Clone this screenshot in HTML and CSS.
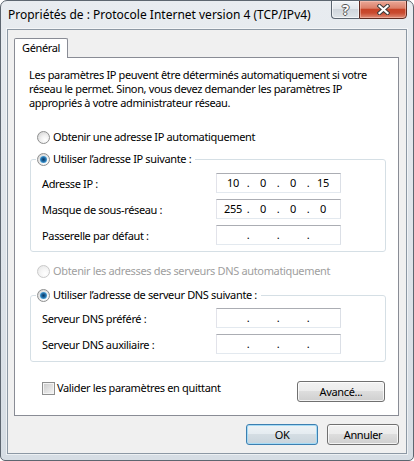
FILE: index.html
```html
<!DOCTYPE html>
<html lang="fr">

<head>
    <meta charset="UTF-8">
    <meta name="viewport" content="width=device-width, initial-scale=1.0">
    <title>Propriétés de : Protocole Internet version 4 (TCP/IPv4)</title>
    <link rel="stylesheet" href="styles.css">
</head>

<body>
    <div class="window">
        <div class="titlebar">
            <span class="title">Propriétés de : Protocole Internet version 4 (TCP/IPv4)</span>
            <div class="caption-buttons">
                <span class="cap-btn cap-help">?</span>
                <span class="cap-btn cap-close">
                    <svg width="13" height="11" viewBox="0 0 13 11">
                        <path d="M2.5 2 L10.5 9 M10.5 2 L2.5 9" stroke="#3b3b3b" stroke-width="4.2" stroke-linecap="square" />
                        <path d="M2.5 2 L10.5 9 M10.5 2 L2.5 9" stroke="#fff" stroke-width="2.2" stroke-linecap="square" />
                    </svg>
                </span>
            </div>
        </div>

        <div class="client">
            <div class="tabs">
                <span class="tab">Général</span>
            </div>

            <div class="tab-page">
                <p class="intro">Les paramètres IP peuvent être déterminés automatiquement si votre<br>réseau le permet. Sinon, vous devez demander les paramètres IP<br>appropriés à votre administrateur réseau.</p>

                <div class="option option-ip-auto"><span class="radio"></span>Obtenir une adresse IP automatiquement</div>

                <fieldset class="group group-ip">
                    <legend><span class="option"><span class="radio checked"></span>Utiliser l’adresse IP suivante :</span></legend>
                    <div class="field-row">
                        <span>Adresse IP :</span>
                        <div class="ip-box"><span class="octet">10</span><span class="dot">.</span><span class="octet">0</span><span class="dot">.</span><span class="octet">0</span><span class="dot">.</span><span class="octet">15</span></div>
                    </div>
                    <div class="field-row">
                        <span>Masque de sous-réseau :</span>
                        <div class="ip-box"><span class="octet">255</span><span class="dot">.</span><span class="octet">0</span><span class="dot">.</span><span class="octet">0</span><span class="dot">.</span><span class="octet">0</span></div>
                    </div>
                    <div class="field-row">
                        <span>Passerelle par défaut :</span>
                        <div class="ip-box"><span class="octet"></span><span class="dot">.</span><span class="octet"></span><span class="dot">.</span><span class="octet"></span><span class="dot">.</span><span class="octet"></span></div>
                    </div>
                </fieldset>

                <div class="option option-dns-auto disabled"><span class="radio"></span>Obtenir les adresses des serveurs DNS automatiquement</div>

                <fieldset class="group group-dns">
                    <legend><span class="option"><span class="radio checked"></span>Utiliser l’adresse de serveur DNS suivante :</span></legend>
                    <div class="field-row">
                        <span>Serveur DNS préféré :</span>
                        <div class="ip-box"><span class="octet"></span><span class="dot">.</span><span class="octet"></span><span class="dot">.</span><span class="octet"></span><span class="dot">.</span><span class="octet"></span></div>
                    </div>
                    <div class="field-row">
                        <span>Serveur DNS auxiliaire :</span>
                        <div class="ip-box"><span class="octet"></span><span class="dot">.</span><span class="octet"></span><span class="dot">.</span><span class="octet"></span><span class="dot">.</span><span class="octet"></span></div>
                    </div>
                </fieldset>

                <div class="validate-row">
                    <span class="option"><span class="checkbox"></span>Valider les paramètres en quittant</span>
                    <button class="btn btn-advanced">Avancé...</button>
                </div>
            </div>

            <div class="dialog-buttons">
                <button class="btn btn-default">OK</button>
                <button class="btn">Annuler</button>
            </div>
        </div>
    </div>
</body>

</html>
```

FILE: styles.css
```css
body {
    margin: 0;
    background: #fff;
    font-family: "Segoe UI", "Noto Sans", sans-serif;
    font-size: 11px;
    letter-spacing: -0.35px;
    color: #000;
}

.window {
    width: 414px;
    height: 461px;
    box-sizing: border-box;
    border: 1px solid #5d6670;
    border-radius: 7px 7px 5px 5px;
    background: linear-gradient(180deg, #e8ecf0 0%, #dde3e9 60%, #d6dde4 100%);
    overflow: hidden;
}

/* title bar */

.titlebar {
    height: 28px;
    display: flex;
    align-items: flex-start;
}

.title {
    padding: 6px 0 0 7px;
    line-height: 16px;
    font-size: 12px;
    letter-spacing: 0;
}

.caption-buttons {
    display: flex;
    margin: -1px 6px 0 auto;
}

.cap-btn {
    height: 19px;
    box-sizing: border-box;
    border: 1px solid #5b6570;
    display: flex;
    align-items: center;
    justify-content: center;
}

.cap-help {
    width: 28px;
    border-right: none;
    border-radius: 0 0 0 4px;
    background: linear-gradient(#f1f4f7, #e3e7eb 45%, #d0d6dc 50%, #dfe4e9);
    box-shadow: inset 0 0 0 1px rgba(255, 255, 255, 0.6);
    color: #fff;
    font-weight: bold;
    font-size: 14px;
    text-shadow: 1px 0 0 #555, -1px 0 0 #555, 0 1px 0 #555, 0 -1px 0 #555;
}

.cap-close {
    width: 48px;
    border-color: #5e2a20;
    border-radius: 0 0 4px 0;
    background: linear-gradient(#eaa897 0%, #dc7f69 42%, #c74428 50%, #c94a2f 70%, #df8d77 100%);
    box-shadow: inset 0 0 0 1px rgba(255, 210, 200, 0.45);
}

/* client area */

.client {
    margin: 0 6px;
    height: 425px;
    box-sizing: border-box;
    border: 1px solid #8c98a4;
    background: #f0f0f0;
    padding: 8px 7px 8px 6px;
    box-shadow: 0 0 0 1px rgba(255, 255, 255, 0.55);
}

.tabs {
    display: flex;
}

.tab {
    position: relative;
    z-index: 1;
    width: 54px;
    height: 20px;
    box-sizing: border-box;
    padding-left: 7px;
    margin-bottom: -1px;
    line-height: 18px;
    border: 1px solid #898c95;
    border-bottom: none;
    border-radius: 2px 2px 0 0;
    background: #fff;
}

.tab-page {
    height: 359px;
    box-sizing: border-box;
    border: 1px solid #898c95;
    background: #fff;
    padding: 10px 12px 0 14px;
}

.intro {
    margin: 0;
    line-height: 14px;
    white-space: nowrap;
}

.option {
    display: flex;
    align-items: center;
    line-height: 14px;
    white-space: nowrap;
}

.option-ip-auto {
    margin: 20px 0 0 8px;
}

.option-dns-auto {
    margin: 12px 0 0 8px;
}

.disabled {
    color: #a0a0a0;
}

.radio {
    position: relative;
    flex: none;
    width: 13px;
    height: 13px;
    box-sizing: border-box;
    margin-right: 3px;
    border: 1px solid #8e8f8f;
    border-radius: 50%;
    background: radial-gradient(circle at 65% 70%, #fff 0%, #f1f1f1 40%, #cdcdcd 100%);
}

.disabled .radio {
    border-color: #c9c9c9;
    background: radial-gradient(circle at 65% 70%, #fff 0%, #f6f6f6 40%, #e4e4e4 100%);
}

.radio.checked::after {
    content: "";
    position: absolute;
    inset: 2px;
    border-radius: 50%;
    background: radial-gradient(circle at 50% 50%, #0e3b63 0%, #1b5f97 35%, #4aa4dc 72%, #a6d9f4 100%);
}

.checkbox {
    flex: none;
    width: 13px;
    height: 13px;
    box-sizing: border-box;
    margin-right: 2px;
    border: 1px solid #8e8f8f;
    background: linear-gradient(135deg, #c9c9c9, #f6f6f6);
    box-shadow: inset 0 0 0 1px #f4f4f4;
}

/* group boxes */

.group {
    margin: 0 0 0 1px;
    min-width: 0;
    border: 1px solid #d5dfe5;
    border-radius: 3px;
    padding: 7px 0 6px 11px;
}

.group legend {
    margin-left: -6px;
    padding: 0 4px 0 1px;
}

.group-ip {
    margin-top: 8px;
}

.group-dns {
    margin-top: 10px;
    padding-top: 6px;
    padding-bottom: 7px;
}

.field-row {
    display: grid;
    grid-template-columns: 174px 125px;
    align-items: center;
    height: 20px;
}

.field-row + .field-row {
    margin-top: 6px;
}

.ip-box {
    display: flex;
    height: 20px;
    box-sizing: border-box;
    padding-left: 4px;
    line-height: 18px;
    border: 1px solid;
    border-color: #abadb3 #dbdfe6 #e3e9ef #e2e3ea;
    background: #fff;
}

.octet {
    width: 24px;
    text-align: center;
}

.dot {
    width: 6px;
    text-align: center;
}

.validate-row {
    display: flex;
    align-items: flex-start;
    justify-content: space-between;
    margin-top: 19px;
    padding: 0 1px 0 13px;
}

/* buttons */

.btn {
    width: 72px;
    height: 21px;
    padding: 0;
    font: inherit;
    letter-spacing: inherit;
    color: #000;
    border: 1px solid #707070;
    border-radius: 3px;
    background: linear-gradient(#f2f2f2 0%, #ebebeb 49%, #dddddd 50%, #cfcfcf 100%);
    box-shadow: inset 0 0 0 1px rgba(255, 255, 255, 0.75);
}

.btn-advanced {
    width: 88px;
}

.btn-default {
    border-color: #3c7fb1;
    background: linear-gradient(#eef3f6 0%, #e4ebf0 49%, #d4dde3 50%, #c9d4dc 100%);
    box-shadow: inset 0 0 0 1px #a6dbf5;
}

.dialog-buttons {
    display: flex;
    justify-content: flex-end;
    gap: 9px;
    margin-top: 8px;
}
```
